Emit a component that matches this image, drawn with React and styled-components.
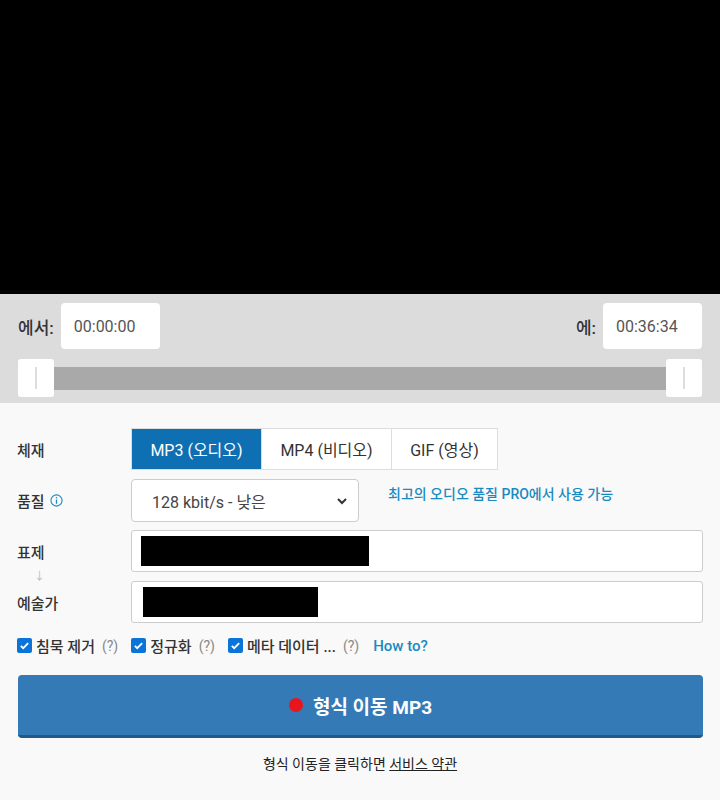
import React, {useState} from 'react'
import styled, {createGlobalStyle} from 'styled-components'

const GlobalStyle = createGlobalStyle`
    html, body {
        margin: 0;
        padding: 0;
        background: #f9f9f9;
    }
    body {
        font-family: Roboto, "Noto Sans CJK KR", sans-serif;
        color: #333;
    }
`

const Page = styled.div`
    width: 720px;
    height: 800px;
    display: flex;
    flex-direction: column;
    overflow: hidden;
`

const Player = styled.div`
    height: 294px;
    background: #000;
`

const TrimPanel = styled.div`
    background: #dcdcdc;
    padding: 9px 18px 6px 18px;
    display: flex;
    flex-direction: column;
    gap: 10px;
`

const TimeRow = styled.div`
    display: flex;
    align-items: center;
    justify-content: space-between;
`

const TimeGroup = styled.div`
    display: flex;
    align-items: center;
    gap: 7px;
`

const TimeLabel = styled.span`
    font-size: 17px;
    font-weight: 500;
    color: #333;
`

const TimeBox = styled.div`
    width: 99px;
    height: 46px;
    box-sizing: border-box;
    background: #fff;
    border-radius: 4px;
    display: flex;
    align-items: center;
    padding-left: 13px;
    font-size: 16px;
    color: #555;
`

const Slider = styled.div`
    display: flex;
    align-items: center;
    height: 38px;
`

const Track = styled.div`
    flex: 1;
    height: 23px;
    background: #a9a9a9;
`

const Handle = styled.div`
    width: 36px;
    height: 38px;
    box-sizing: border-box;
    background: #fff;
    border-radius: 3px;
    display: flex;
    justify-content: center;
    align-items: center;
    &::after {
        content: '';
        width: 2px;
        height: 22px;
        background: #ddd;
    }
`

const Form = styled.div`
    padding: 25px 17px 0 17px;
    display: flex;
    flex-direction: column;
`

const Row = styled.div`
    display: flex;
    align-items: center;
    margin-bottom: ${p => p.$mb || 0}px;
`

const Label = styled.div`
    width: 114px;
    font-size: 15px;
    font-weight: 500;
    color: #333;
    display: flex;
    align-items: center;
    gap: 5px;
`

const Tabs = styled.div`
    display: flex;
    border: 1px solid #ddd;
    background: #fff;
`

const Tab = styled.button`
    height: 40px;
    width: ${p => p.$w}px;
    border: none;
    border-left: ${p => p.$first ? 'none' : '1px solid #ddd'};
    background: ${p => p.$active ? '#0f6fb3' : '#fff'};
    color: ${p => p.$active ? '#fff' : '#333'};
    font-family: inherit;
    font-size: 16px;
    cursor: pointer;
    padding: 0;
`

const Select = styled.div`
    width: 228px;
    height: 43px;
    box-sizing: border-box;
    background: #fff;
    border: 1px solid #ccc;
    border-radius: 4px;
    display: flex;
    align-items: center;
    justify-content: space-between;
    padding: 0 10px 0 20px;
    font-size: 16px;
    color: #444;
`

const ProLink = styled.a`
    margin-left: 29px;
    margin-top: -16px;
    font-size: 14px;
    font-weight: 500;
    color: #1a8bc0;
    text-decoration: none;
`

const TextInput = styled.div`
    flex: 1;
    height: 42px;
    box-sizing: border-box;
    background: #fff;
    border: 1px solid #ccc;
    border-radius: 3px;
    display: flex;
    align-items: center;
    padding-left: ${p => p.$pad}px;
`

const Redact = styled.div`
    height: 30px;
    background: #000;
`

const Arrow = styled.div`
    font-size: 11px;
    color: #bbb;
    padding-left: 17px;
    height: 9px;
    line-height: 9px;
`

const Checks = styled.div`
    display: flex;
    align-items: center;
    margin-top: 12px;
`

const Check = styled.label`
    display: flex;
    align-items: center;
    gap: 4px;
    font-size: 15px;
    font-weight: 500;
    color: #333;
    margin-right: ${p => p.$mr}px;
`

const Box = styled.span`
    width: 15px;
    height: 15px;
    border-radius: 2px;
    background: #0a74d9;
    display: inline-flex;
    align-items: center;
    justify-content: center;
`

const Help = styled.span`
    color: #888;
    font-size: 14px;
    font-weight: 400;
    margin-left: 3px;
`

const HowTo = styled.a`
    font-size: 15px;
    font-weight: 500;
    color: #1a8bc0;
    text-decoration: none;
`

const ConvertButton = styled.button`
    margin: 19px 0 0 1px;
    height: 63px;
    background: #337ab7;
    border: none;
    border-bottom: 3px solid #23588a;
    border-radius: 4px;
    color: #fff;
    font-family: inherit;
    font-size: 19px;
    font-weight: bold;
    display: flex;
    align-items: center;
    justify-content: center;
    gap: 10px;
    cursor: pointer;
`

const Dot = styled.span`
    width: 14px;
    height: 14px;
    border-radius: 50%;
    background: #e8161c;
`

const Terms = styled.div`
    text-align: center;
    margin-top: 15px;
    font-size: 14px;
    color: #222;
    a {
        color: #222;
        text-decoration: underline;
    }
`

function Tick() {
    return (
        <svg width="11" height="11" viewBox="0 0 12 12">
            <path d="M2 6.3l2.6 2.6L10 3.4" stroke="#fff" strokeWidth="2" fill="none" />
        </svg>
    )
}

function InfoIcon() {
    return (
        <svg width="13" height="13" viewBox="0 0 14 14">
            <circle cx="7" cy="7" r="6" fill="none" stroke="#1a8bc0" strokeWidth="1.2" />
            <rect x="6.3" y="6" width="1.4" height="4.5" fill="#1a8bc0" />
            <rect x="6.3" y="3.4" width="1.4" height="1.4" fill="#1a8bc0" />
        </svg>
    )
}

function Chevron() {
    return (
        <svg width="12" height="10" viewBox="0 0 12 10">
            <path d="M2 3l4 4 4-4" stroke="#333" strokeWidth="2" fill="none" />
        </svg>
    )
}

export default function App() {
    const [format, setFormat] = useState('mp3')

    const formats = [
        {id: 'mp3', text: 'MP3 (오디오)', w: 129},
        {id: 'mp4', text: 'MP4 (비디오)', w: 130},
        {id: 'gif', text: 'GIF (영상)', w: 106},
    ]

    return (
        <Page>
            <GlobalStyle />
            <Player />
            <TrimPanel>
                <TimeRow>
                    <TimeGroup>
                        <TimeLabel>에서:</TimeLabel>
                        <TimeBox>00:00:00</TimeBox>
                    </TimeGroup>
                    <TimeGroup>
                        <TimeLabel>에:</TimeLabel>
                        <TimeBox>00:36:34</TimeBox>
                    </TimeGroup>
                </TimeRow>
                <Slider>
                    <Handle />
                    <Track />
                    <Handle />
                </Slider>
            </TrimPanel>
            <Form>
                <Row $mb={9}>
                    <Label>체재</Label>
                    <Tabs>
                        {formats.map((f, i) => (
                            <Tab key={f.id} $w={f.w} $first={i === 0} $active={format === f.id}
                                onClick={() => setFormat(f.id)}>
                                {f.text}
                            </Tab>
                        ))}
                    </Tabs>
                </Row>
                <Row $mb={8}>
                    <Label>품질 <InfoIcon /></Label>
                    <Select>128 kbit/s - 낮은 <Chevron /></Select>
                    <ProLink href="#">최고의 오디오 품질 PRO에서 사용 가능</ProLink>
                </Row>
                <Row>
                    <Label>표제</Label>
                    <TextInput $pad={9}><Redact style={{width: 228}} /></TextInput>
                </Row>
                <Arrow>↓</Arrow>
                <Row>
                    <Label>예술가</Label>
                    <TextInput $pad={11}><Redact style={{width: 175}} /></TextInput>
                </Row>
                <Checks>
                    <Check $mr={13}><Box><Tick /></Box>침묵 제거<Help>(?)</Help></Check>
                    <Check $mr={13}><Box><Tick /></Box>정규화<Help>(?)</Help></Check>
                    <Check $mr={14}><Box><Tick /></Box>메타 데이터 ...<Help>(?)</Help></Check>
                    <HowTo href="#">How to?</HowTo>
                </Checks>
                <ConvertButton><Dot />형식 이동 MP3</ConvertButton>
                <Terms>형식 이동을 클릭하면 <a href="#">서비스 약관</a></Terms>
            </Form>
        </Page>
    )
}
